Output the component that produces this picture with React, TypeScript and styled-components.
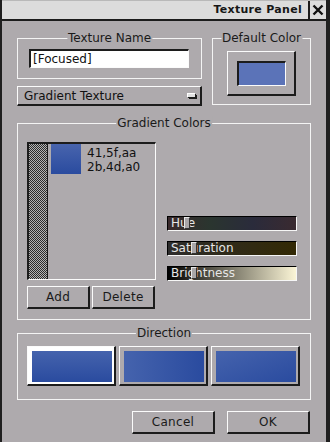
import React from 'react';
import styled, { createGlobalStyle, css } from 'styled-components';

const GlobalStyle = createGlobalStyle`
  html, body {
    margin: 0;
    padding: 0;
    background: #1f1f1f;
    font-family: "DejaVu Sans", "Noto Sans", sans-serif;
  }
`;

const BODY = '#aeaaad';
const DARK = '#1c1c1c';

const raised = css`
  border-top: 1px solid #fbfbfb;
  border-left: 1px solid #fbfbfb;
  border-right: 2px solid ${DARK};
  border-bottom: 2px solid ${DARK};
`;

const sunken = css`
  border-top: 2px solid ${DARK};
  border-left: 2px solid ${DARK};
  border-right: 1px solid #fbfbfb;
  border-bottom: 1px solid #fbfbfb;
`;

const Window = styled.div`
  margin-left: 2px;
  width: 324px;
  height: 442px;
  background: ${BODY};
  display: flex;
  flex-direction: column;
`;

const TitleBar = styled.div`
  display: flex;
  height: 18px;
  background: #dcdcdc;
  border-top: 1px solid #b9b9b9;
  border-bottom: 2px solid ${DARK};
`;

const Title = styled.div`
  flex: 1;
  text-align: right;
  padding-right: 6px;
  font-size: 11px;
  font-weight: bold;
  line-height: 18px;
  color: #161616;
  letter-spacing: 0.3px;
`;

const CloseBox = styled.div`
  width: 16px;
  border-left: 2px solid ${DARK};
  display: flex;
  align-items: center;
  justify-content: center;
`;

const Content = styled.div`
  padding: 17px 15px 0 15px;
  display: flex;
  flex-direction: column;
`;

const TopRow = styled.div`
  display: flex;
  gap: 10px;
  align-items: flex-start;
`;

const LeftCol = styled.div`
  width: 185px;
  display: flex;
  flex-direction: column;
  gap: 7px;
`;

const Group = styled.div<{ $pad: string; $mt?: number; $w?: number }>`
  position: relative;
  border: 1px solid #f4f4f4;
  padding: ${(p) => p.$pad};
  margin-top: ${(p) => p.$mt ?? 0}px;
  ${(p) => (p.$w ? `width: ${p.$w}px;` : '')}
`;

const Legend = styled.span`
  position: absolute;
  top: -8px;
  left: 50%;
  transform: translateX(-50%);
  background: ${BODY};
  padding: 0 1px;
  font-size: 12px;
  line-height: 14px;
  color: #1a1a1a;
  white-space: nowrap;
`;

const TextInput = styled.div`
  height: 16px;
  background: #fff;
  ${sunken};
  font-size: 12px;
  line-height: 16px;
  padding-left: 2px;
  color: #111;
`;

const Dropdown = styled.div`
  height: 17px;
  ${raised};
  display: flex;
  align-items: center;
  justify-content: space-between;
  padding: 0 5px 0 6px;
  font-size: 12px;
  color: #111;
`;

const DropIcon = styled.span`
  width: 7px;
  height: 3px;
  background: #e2e2e2;
  border-top: 1px solid #fff;
  border-left: 1px solid #fff;
  box-shadow: 1px 1px 0 #1c1c1c, 2px 2px 0 #1c1c1c;
  margin-bottom: 1px;
`;

const ColorButton = styled.div`
  width: 49px;
  ${raised};
  padding: 9px 8px 8px 9px;
  margin: 0 auto;
`;

const Swatch = styled.div<{ $bg: string }>`
  height: 22px;
  ${sunken};
  background: ${(p) => p.$bg};
`;

const GradientBody = styled.div`
  display: flex;
  gap: 11px;
`;

const ListCol = styled.div`
  width: 129px;
  display: flex;
  flex-direction: column;
  gap: 6px;
`;

const ListBox = styled.div`
  height: 135px;
  ${sunken};
  display: flex;
`;

const Checker = styled.div`
  width: 18px;
  border-right: 1px solid ${DARK};
  background: repeating-conic-gradient(#2c2c2c 0 25%, #b4b4b4 0 50%) 0 0 / 2px 2px;
`;

const Entry = styled.div`
  display: flex;
  gap: 6px;
  padding: 0 0 0 3px;
  align-items: flex-start;
  height: 30px;
`;

const EntryTexts = styled.div`
  font-size: 12px;
  line-height: 14px;
  color: #111;
  padding-top: 2px;
`;

const ListSwatch = styled.div`
  width: 30px;
  height: 30px;
  background: linear-gradient(to bottom, #4864ad, #2a4b9f);
`;

const ButtonRow = styled.div<{ $gap: number; $end?: boolean }>`
  display: flex;
  gap: ${(p) => p.$gap}px;
  justify-content: ${(p) => (p.$end ? 'flex-end' : 'flex-start')};
  ${(p) => (p.$end ? 'margin-top: 11px; padding-right: 1px;' : '')}
`;

const Button = styled.div<{ $w: number }>`
  width: ${(p) => p.$w - 3}px;
  height: 20px;
  ${raised};
  display: flex;
  align-items: center;
  justify-content: center;
  font-size: 12px;
  color: #1a1a1a;
  letter-spacing: 0.3px;
`;

const SliderCol = styled.div`
  width: 130px;
  padding-top: 74px;
  display: flex;
  flex-direction: column;
  gap: 10px;
`;

const SliderBar = styled.div<{ $bg: string }>`
  position: relative;
  height: 13px;
  border-top: 1px solid #000;
  border-left: 1px solid #000;
  border-right: 1px solid #f6f6f6;
  border-bottom: 1px solid #f6f6f6;
  background: ${(p) => p.$bg};
  font-size: 12px;
  line-height: 13px;
  color: #e6e6e6;
  padding-left: 3px;
`;

const Thumb = styled.span<{ $left: number }>`
  position: absolute;
  top: 0;
  left: ${(p) => p.$left}px;
  width: 4px;
  height: 10px;
  background: #a9a6a8;
  border-top: 1px solid #e8e8e8;
  border-left: 1px solid #e8e8e8;
  border-right: 1px solid #333;
  border-bottom: 1px solid #333;
`;

const DirRow = styled.div`
  display: flex;
  gap: 3px;
`;

const DirButton = styled.div<{ $selected?: boolean }>`
  width: 80px;
  height: 31px;
  ${raised};
  padding: 4px 2px 2px 4px;
  background: ${(p) => (p.$selected ? '#fff' : BODY)};
`;

const DirFill = styled.div<{ $dir: string }>`
  height: 100%;
  background: linear-gradient(${(p) => p.$dir}, #4563ad, #2a4b9f);
`;

const sliders = [
  { label: 'Hue', bg: 'linear-gradient(to right, #3a2a2c, #2a352f 33%, #2a2b3b 66%, #3a2a30)', pos: 16 },
  { label: 'Saturation', bg: 'linear-gradient(to right, #2d2c2c, #332904)', pos: 23 },
  { label: 'Brightness', bg: 'linear-gradient(to right, #000, #fbf5d6)', pos: 23 },
];

const directions = ['to bottom', 'to right', 'to bottom right'];

const App = () => {
  return (
    <Window>
      <GlobalStyle />
      <TitleBar>
        <Title>Texture Panel</Title>
        <CloseBox>
          <svg width="12" height="12" viewBox="0 0 12 12">
            <path d="M1.5 1.5 L10.5 10.5 M10.5 1.5 L1.5 10.5" stroke="#111" strokeWidth="2.4" />
          </svg>
        </CloseBox>
      </TitleBar>
      <Content>
        <TopRow>
          <LeftCol>
            <Group $pad="10px 12px 10px 11px">
              <Legend>Texture Name</Legend>
              <TextInput>[Focused]</TextInput>
            </Group>
            <Dropdown>
              Gradient Texture
              <DropIcon />
            </Dropdown>
          </LeftCol>
          <Group $pad="12px 0 8px 0" $w={97}>
            <Legend>Default Color</Legend>
            <ColorButton>
              <Swatch $bg="#5b73b8" />
            </ColorButton>
          </Group>
        </TopRow>

        <Group $pad="18px 13px 10px 9px" $mt={17}>
          <Legend>Gradient Colors</Legend>
          <GradientBody>
            <ListCol>
              <ListBox>
                <Checker />
                <Entry>
                  <ListSwatch />
                  <EntryTexts>
                    41,5f,aa
                    <br />
                    2b,4d,a0
                  </EntryTexts>
                </Entry>
              </ListBox>
              <ButtonRow $gap={2}>
                <Button $w={63}>Add</Button>
                <Button $w={63}>Delete</Button>
              </ButtonRow>
            </ListCol>
            <SliderCol>
              {sliders.map((s) => (
                <SliderBar key={s.label} $bg={s.bg}>
                  {s.label}
                  <Thumb $left={s.pos} />
                </SliderBar>
              ))}
            </SliderCol>
          </GradientBody>
        </Group>

        <Group $pad="12px 10px 13px 9px" $mt={13}>
          <Legend>Direction</Legend>
          <DirRow>
            {directions.map((d, i) => (
              <DirButton key={d} $selected={i === 0}>
                <DirFill $dir={d} />
              </DirButton>
            ))}
          </DirRow>
        </Group>

        <ButtonRow $gap={12} $end>
          <Button $w={83}>Cancel</Button>
          <Button $w={83}>OK</Button>
        </ButtonRow>
      </Content>
    </Window>
  );
};

export default App;
